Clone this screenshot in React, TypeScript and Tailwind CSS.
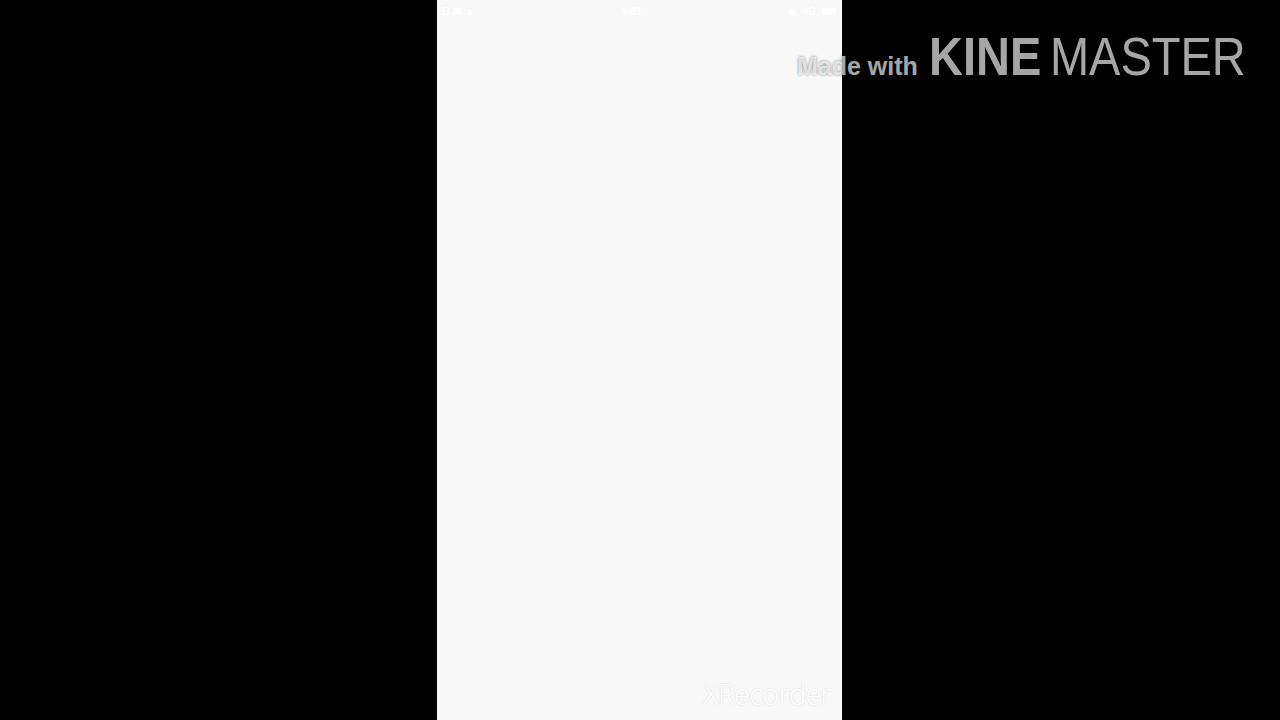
export default function App() {
  return (
    <div className="relative h-[720px] w-[1280px] overflow-hidden bg-black" style={{ fontFamily: '"Liberation Sans", Arial, sans-serif' }}>
      <div className="ml-[437px] flex h-full w-[405px] flex-col bg-[#f8f8f8]">
        {/* status bar, almost invisible white on white */}
        <div className="flex h-[22px] items-center justify-between px-[6px] text-[10px] text-white">
          <div className="flex items-center gap-[4px]">
            <span className="h-[8px] w-[6px] border border-white" />
            <span className="h-[6px] w-[8px] bg-white" />
            <span>▲</span>
          </div>
          <span className="font-bold">6:03</span>
          <div className="flex items-center gap-[6px]">
            <span>◉</span>
            <span>4G</span>
            <span className="h-[7px] w-[14px] bg-white" />
          </div>
        </div>
        <div className="flex-1" />
        <div className="flex h-[52px] items-center justify-end pr-[11px]">
          <span
            className="text-[29px] font-light tracking-[-0.8px] text-white"
            style={{ fontFamily: '"Open Sans", sans-serif', textShadow: '0 0 2px rgba(0,0,0,0.12)' }}
          >
            XRecorder
          </span>
        </div>
      </div>

      {/* KineMaster watermark overlay */}
      <div className="absolute left-[797px] top-[29px] flex items-baseline whitespace-nowrap text-white/65">
        <span
          className="mr-[11px] text-[25px] font-bold"
          style={{ textShadow: '0 0 3px rgba(0,0,0,0.45)' }}
        >
          Made with
        </span>
        <span className="inline-flex origin-left scale-x-[0.87] items-baseline">
          <span className="text-[54px] font-bold leading-none">KINE</span>
          <span className="ml-[10px] text-[54px] font-light leading-none">MASTER</span>
        </span>
      </div>
    </div>
  );
}
